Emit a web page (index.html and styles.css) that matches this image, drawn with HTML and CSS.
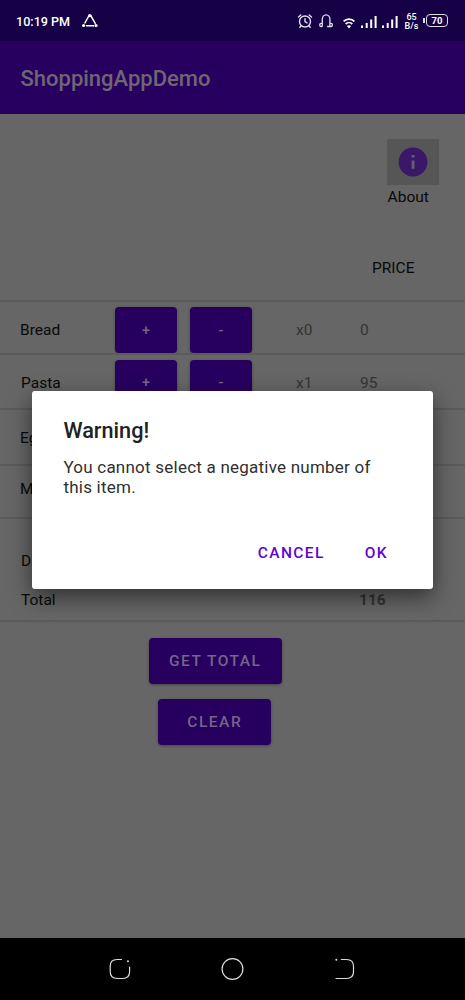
FILE: index.html
```html
<!DOCTYPE html>
<html lang="en">
<head>
<meta charset="utf-8">
<title>ShoppingAppDemo</title>
<link rel="stylesheet" href="styles.css">
</head>
<body>
<div class="phone">
  <header class="status">
    <span class="time">10:19 PM</span>
    <svg class="share" width="18" height="16" viewBox="0 0 18 16" fill="none" stroke="#fff" stroke-width="1.5"><path d="M7.8 2 3.6 9.5M5 11.7h8M14.5 9.8 9.4 1"/><g fill="#fff" stroke="none"><circle cx="8.7" cy="1.6" r="1.6"/><circle cx="2.6" cy="11.5" r="1.6"/><circle cx="15" cy="11.5" r="1.6"/></g></svg>
    <svg class="alarm" width="16" height="16" viewBox="0 0 16 16" fill="none" stroke="#e2dcf0" stroke-width="1.4" stroke-linecap="round"><circle cx="8" cy="7.5" r="5.5"/><path d="M8 4.7v3l2 1.2M1.5 3 3.8 1M14.5 3 12.2 1M4 12l-1.2 1.2M12 12l1.2 1.2"/></svg>
    <svg class="phones" width="16" height="16" viewBox="0 0 16 16" fill="none" stroke="#e2dcf0" stroke-width="1.3"><path d="M4.3 12.5V5.3a3.8 4.4 0 0 1 7.6 0v7.2M4.3 9.3H3a1.2 1.2 0 0 0-1.2 1.2v.8A1.2 1.2 0 0 0 3 12.5h1.3M11.9 9.3h1.2a1.2 1.2 0 0 1 1.2 1.2v.8a1.2 1.2 0 0 1-1.2 1.2h-4"/></svg>
    <svg class="wifi" width="14" height="12" viewBox="0 0 14 12" fill="none" stroke="#fff" stroke-width="1.8"><path d="M1.6 4.4a7.6 7.6 0 0 1 10.8 0M3.7 7a4.7 4.7 0 0 1 6.6 0"/><path d="M4.9 9a3.3 3.3 0 0 1 4.2 0L7 11.4z" fill="#fff" stroke="none"/></svg>
    <svg class="signal" width="16" height="13" viewBox="0 0 16 13" fill="#fff"><path d="M0 10.5h2V13H0zM4.7 8h2v5h-2zM9.2 4.5h2V13h-2zM13.6 1h2v12h-2z"/></svg>
    <svg class="signal" width="16" height="13" viewBox="0 0 16 13" fill="#fff"><path d="M0 10.5h2V13H0zM4.7 8h2v5h-2zM9.2 4.5h2V13h-2zM13.6 1h2v12h-2z"/></svg>
    <span class="rate">65<br>B/s</span>
    <span class="cap"></span><span class="battery">70</span>
  </header>
  <div class="appbar">ShoppingAppDemo</div>
  <main class="content">
    <div class="top">
      <div class="about">
        <div class="info"><svg width="30" height="30" viewBox="0 0 30 30"><circle cx="15" cy="15" r="14.4" fill="#3a1868"/><path d="M13.6 8h2.9v2.6h-2.9zM13.6 13.4h2.9v8.4h-2.9z" fill="#685a7a"/></svg></div>
        <span class="about-label">About</span>
      </div>
      <div class="price-head">PRICE</div>
    </div>
    <div class="row bread"><span class="name">Bread</span><span class="btn">+</span><span class="btn minus">-</span><span class="qty">x0</span><span class="cost">0</span></div>
    <div class="row pasta"><span class="name">Pasta</span><span class="btn">+</span><span class="btn minus">-</span><span class="qty">x1</span><span class="cost">95</span></div>
    <div class="row eggs"><span class="name">Eggs</span></div>
    <div class="row milk"><span class="name">Milk</span></div>
    <div class="summary">
      <div class="line delivery"><span>D</span></div>
      <div class="line total"><span class="tl">Total</span><span class="sum">116</span></div>
    </div>
    <div class="actions"><span class="action get">GET TOTAL</span><span class="action clear">CLEAR</span></div>
  </main>
  <nav class="nav">
    <svg width="22" height="22" viewBox="0 0 22 22" fill="none" stroke="#ddd" stroke-width="1.2" stroke-linecap="round"><path d="M12.5 1.5H8C3.5 1.5 1.2 4 1.2 8.2v5.3c0 4.5 2.5 7 7 7h5.4c4.5 0 7-2.5 7-7V9"/><circle cx="19" cy="3.2" r="1" fill="#ddd" stroke="none"/></svg>
    <svg width="24" height="24" viewBox="0 0 24 24" fill="none" stroke="#ddd" stroke-width="1.2"><circle cx="11.5" cy="12" r="10.4"/></svg>
    <svg width="22" height="22" viewBox="0 0 22 22" fill="none" stroke="#ddd" stroke-width="1.2" stroke-linecap="round"><path d="M7.3 1.5h5.2c4.5 0 7 2.3 7 6.8v5.5c0 4.5-2.5 6.7-7 6.7H2"/><circle cx="2.3" cy="1.8" r="1" fill="#ddd" stroke="none"/></svg>
  </nav>
  <section class="dialog" role="dialog">
    <h1>Warning!</h1>
    <p>You cannot select a negative number of<br>this item.</p>
    <div class="choices"><span>CANCEL</span><span>OK</span></div>
  </section>
</div>
</body>
</html>
```
FILE: styles.css
```css
* { box-sizing: border-box; }
body { margin: 0; background: #666; font-family: Roboto, "Liberation Sans", sans-serif; }
.phone { position: relative; width: 465px; height: 1000px; display: flex; flex-direction: column; overflow: hidden; color: #090909; }
.status { height: 41px; background: #160046; display: flex; align-items: center; padding: 2px 16px 0; color: #fff; flex: none; }
.time { font-size: 12.6px; font-weight: 500; width: 65px; white-space: nowrap; }
.share { margin-right: 197px; flex: none; }
.alarm { margin-left: 1px; }
.phones { margin-left: 5px; }
.wifi { margin: 2px 0 0 8px; }
.signal { margin: 0 0 1px 5px; }
.wifi, .alarm, .phones, .signal { flex: none; }
.rate { font-size: 9px; line-height: 8.5px; font-weight: 500; text-align: center; margin-left: 6px; width: 15px; flex: none; }
.cap { width: 2px; height: 5px; background: #ddd; margin: 0 0 2px 4px; flex: none; }
.battery { margin: 0 0 2px 1px; border: 1.5px solid #ddd; border-radius: 4px; width: 22px; height: 13px; font-size: 9.5px; line-height: 11px; font-weight: 700; text-align: center; flex: none; }
.appbar { height: 73px; flex: none; background: #27005f; color: #6f6573; font-size: 22px; font-weight: 500; line-height: 75px; padding-left: 20.5px; }
.content { flex: 1; background: #666; font-size: 15.5px; }
.top { height: 188px; display: flex; flex-direction: column; padding-top: 25px; border-bottom: 2px solid #5b5b5b; }
.about { margin-left: 387px; }
.info { width: 52px; height: 46px; background: #565656; display: flex; align-items: center; justify-content: center; }
.about-label { display: block; line-height: 24px; padding-left: .6px; }
.price-head { margin: 47px 0 0 372px; line-height: 24px; }
.row { display: grid; grid-template-columns: 95px 62px 62px 62px 64px; padding-left: 20px; border-bottom: 2px solid #5b5b5b; align-items: center; overflow: hidden; }
.row .minus { margin-left: 13px; }
.pasta .name { padding-left: 1px; }
.btn { width: 62px; height: 46px; border-radius: 4px; background: #27005f; color: #76648a; display: flex; align-items: center; justify-content: center; font-weight: 500; font-size: 14.5px; box-shadow: 0 1px 3px #0005; }
.qty, .cost { color: #343434; }
.qty { margin-left: 57px; }
.cost { margin-left: 59px; }
.bread { height: 53px; padding-top: 5px; }
.pasta { height: 55px; padding-top: 2px; }
.eggs { height: 56px; padding-top: 2px; }
.milk { height: 53px; padding-bottom: 6px; }
.summary { height: 103px; border-bottom: 2px solid #5b5b5b; padding: 30px 0 0 21px; }
.line { line-height: 24px; display: flex; }
.total { margin-top: 15px; }
.tl { width: 338px; }
.sum { font-weight: 700; color: #343434; }
.actions { display: flex; flex-direction: column; align-items: flex-start; padding-top: 16px; gap: 15px; }
.action { height: 46px; border-radius: 4px; background: #27005f; color: #76648a; display: flex; align-items: center; justify-content: center; font-weight: 500; font-size: 15.5px; letter-spacing: 1.5px; box-shadow: 0 1px 3px #0005; }
.get { width: 133.5px; margin-left: 148.5px; }
.clear { width: 113.5px; margin-left: 157.5px; padding-left: 1px; }
.nav { height: 62px; flex: none; background: #000; display: flex; align-items: center; justify-content: space-between; padding: 0 109px 0 109px; }
.dialog { position: absolute; left: 32px; top: 391px; width: 401px; height: 197.5px; border-radius: 3px; background: #fff; box-shadow: 0 8px 22px #0008; padding: 24px 31.4px; color: #212121; }
.dialog h1 { margin: 0; font-size: 21.7px; font-weight: 500; line-height: 31px; }
.dialog p { margin: 10.5px 0 0; font-size: 17px; letter-spacing: .23px; line-height: 20.5px; color: #303030; white-space: nowrap; }
.choices { display: flex; justify-content: flex-end; gap: 40px; margin: 44.5px 13.6px 0 0; color: #6200d8; font-size: 15.5px; font-weight: 500; letter-spacing: 1.4px; line-height: 22px; }
```
